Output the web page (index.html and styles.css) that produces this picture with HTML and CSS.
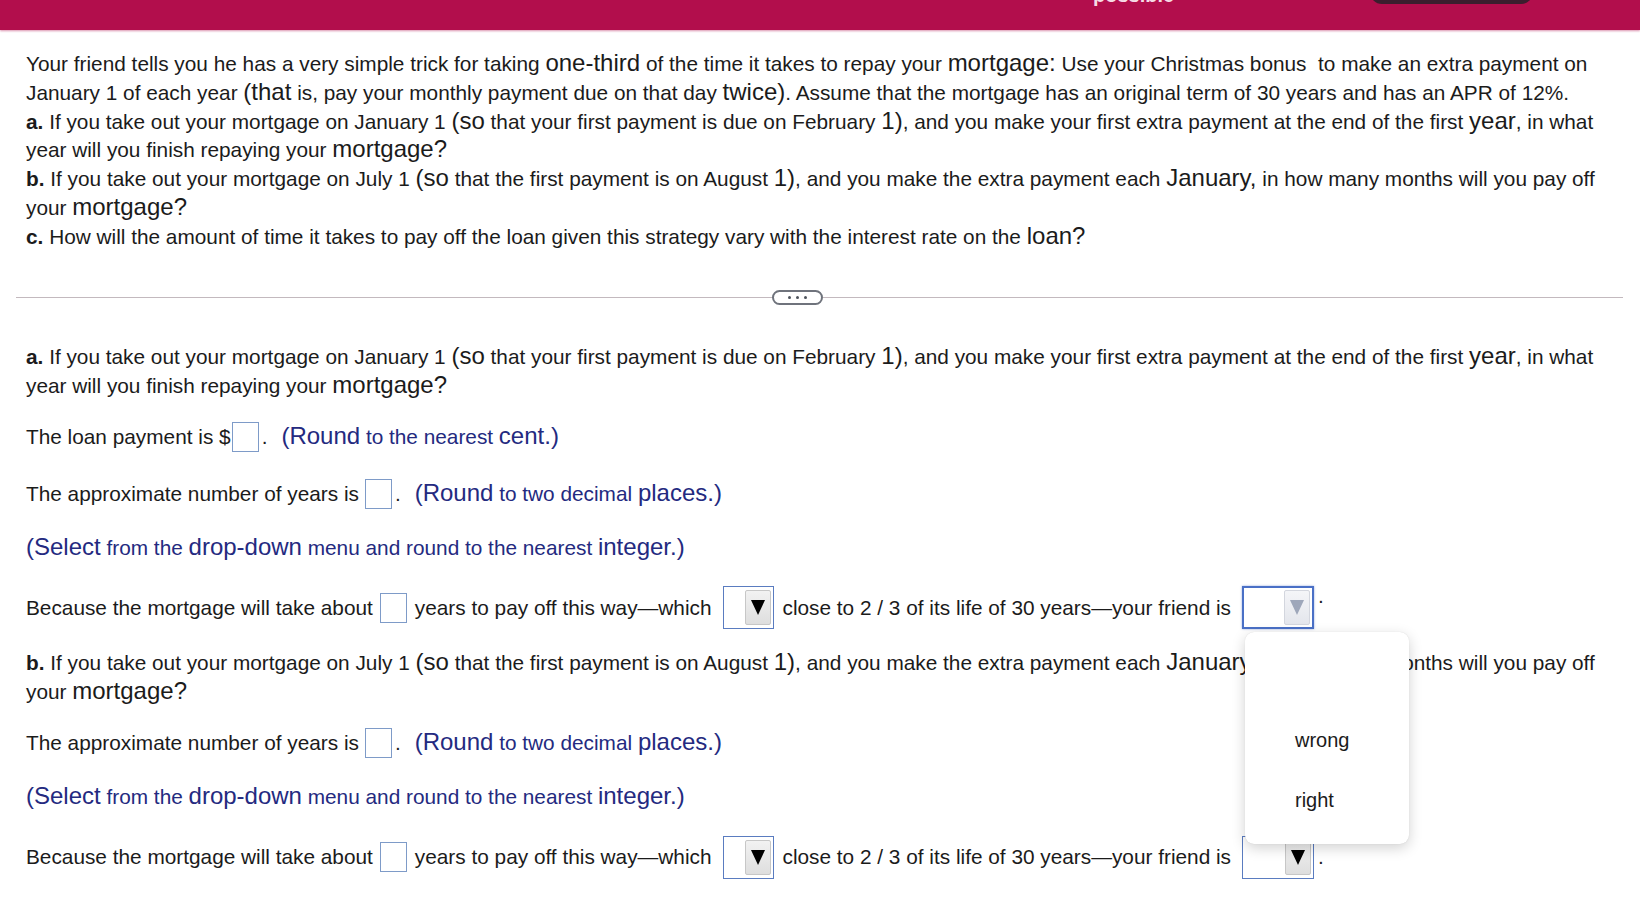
FILE: index.html
```html
<!DOCTYPE html>
<html>
<head>
<meta charset="utf-8">
<link rel="stylesheet" href="styles.css">
</head>
<body>
<header class="topbar">
  <span class="topbar-text">possible</span>
  <span class="topbar-btn"></span>
</header>
<main class="content">
  <div class="intro">
    <p class="line">Your friend tells you he has a very simple trick for taking <span class="big">one-third</span> of the time it takes to repay your <span class="big">mortgage:</span> Use your Christmas bonus&nbsp; to make an extra payment on January 1 of each year <span class="big">(that</span> is, pay your monthly payment due on that day <span class="big">twice)</span>. Assume that the mortgage has an original term of 30 years and has an APR of 12%.</p>
    <p class="line"><b>a.</b> If you take out your mortgage on January 1 <span class="big">(so</span> that your first payment is due on February <span class="big">1)</span>, and you make your first extra payment at the end of the first <span class="big">year</span>, in what year will you finish repaying your <span class="big">mortgage?</span></p>
    <p class="line"><b>b.</b> If you take out your mortgage on July 1 <span class="big">(so</span> that the first payment is on August <span class="big">1)</span>, and you make the extra payment each <span class="big">January,</span> in how many months will you pay off your <span class="big">mortgage?</span></p>
    <p class="line"><b>c.</b> How will the amount of time it takes to pay off the loan given this strategy vary with the interest rate on the <span class="big">loan?</span></p>
  </div>

  <div class="divider"><span class="rule rule-left"></span><span class="pill"><i></i><i></i><i></i></span><span class="rule"></span></div>

  <p class="line part-a"><b>a.</b> If you take out your mortgage on January 1 <span class="big">(so</span> that your first payment is due on February <span class="big">1)</span>, and you make your first extra payment at the end of the first <span class="big">year</span>, in what year will you finish repaying your <span class="big">mortgage?</span></p>

  <div class="row r-loan">The loan payment is $<span class="box box-tight"></span>.<span class="hint"><span class="big">(Round</span> to the nearest <span class="big">cent.)</span></span></div>
  <div class="row r-years">The approximate number of years is<span class="box"></span>.<span class="hint"><span class="big">(Round</span> to two decimal <span class="big">places.)</span></span></div>
  <div class="row r-select"><span class="hint hint-first"><span class="big">(Select</span> from the <span class="big">drop-down</span> menu and round to the nearest <span class="big">integer.)</span></span></div>
  <div class="row r-because">Because the mortgage will take about<span class="box box-mid"></span>years to pay off this way—which<span class="select"><span class="arrow"></span></span>close to 2 / 3 of its life of 30 years—your friend is<span class="select select-focus"><span class="arrow"></span></span>.
    <div class="menu">
      <div class="menu-item">wrong</div>
      <div class="menu-item">right</div>
    </div>
  </div>

  <p class="line part-b"><b>b.</b> If you take out your mortgage on July 1 <span class="big">(so</span> that the first payment is on August <span class="big">1)</span>, and you make the extra payment each <span class="big">January,</span> in how many months will you pay off your <span class="big">mortgage?</span></p>

  <div class="row r-years2">The approximate number of years is<span class="box"></span>.<span class="hint"><span class="big">(Round</span> to two decimal <span class="big">places.)</span></span></div>
  <div class="row r-select"><span class="hint hint-first"><span class="big">(Select</span> from the <span class="big">drop-down</span> menu and round to the nearest <span class="big">integer.)</span></span></div>
  <div class="row r-because">Because the mortgage will take about<span class="box box-mid"></span>years to pay off this way—which<span class="select"><span class="arrow"></span></span>close to 2 / 3 of its life of 30 years—your friend is<span class="select select-last"><span class="arrow"></span></span>.</div>
</main>
</body>
</html>
```
FILE: styles.css
```css
html, body {
  margin: 0;
  padding: 0;
  background: #ffffff;
}
body {
  font-family: "Liberation Sans", Arial, Helvetica, sans-serif;
  color: #1b1b1b;
  font-size: 20.8px;
  overflow: hidden;
}
.topbar {
  height: 30px;
  background: #b20e4c;
  display: flex;
  align-items: flex-start;
  box-shadow: 0 1px 2px rgba(178, 14, 76, 0.45);
  overflow: hidden;
}
.topbar-text {
  margin-left: 1093px;
  margin-top: -15px;
  font-size: 20px;
  line-height: 20px;
  color: #f6dbe5;
  font-weight: bold;
}
.topbar-btn {
  margin-left: auto;
  margin-right: 107px;
  margin-top: -36px;
  width: 163px;
  height: 40px;
  border-radius: 12px;
  background: #3b1e2e;
}
.content {
  padding: 20px 16px 0 26px;
  position: relative;
}
.line {
  margin: 0;
  line-height: 28.75px;
  width: 1605px;
}
.big {
  font-size: 24px;
  line-height: 20px;
}
b {
  font-weight: bold;
}
.divider {
  display: flex;
  align-items: center;
  margin: 38px 1px 0 -10px;
  height: 16px;
}
.rule {
  flex: 1;
  height: 1px;
  background: #c3b9be;
}
.rule-left {
  flex: none;
  width: 756px;
}
.pill {
  width: 47px;
  height: 11px;
  border: 2px solid #6f737c;
  border-radius: 8px;
  display: flex;
  align-items: center;
  justify-content: center;
  gap: 5px;
}
.pill i {
  width: 3px;
  height: 3px;
  border-radius: 50%;
  background: #4e535c;
}
.part-a {
  margin-top: 38px;
}
.row {
  height: 44px;
  display: flex;
  align-items: center;
  white-space: pre;
  position: relative;
}
.r-loan { margin-top: 14px; }
.r-years { margin-top: 13px; }
.r-select { margin-top: 10px; }
.r-because { margin-top: 16px; }
.part-b { margin-top: 19px; }
.r-years2 { margin-top: 15px; }
.hint {
  color: #242a80;
  font-size: 20.8px;
  margin-left: 14px;
}
.hint-first {
  margin-left: 0;
}
.box {
  display: inline-block;
  width: 25px;
  height: 28px;
  border: 1px solid #7e9bc8;
  margin: 0 3px 0 6px;
}
.box-tight {
  margin-left: 1px;
}
.box-mid {
  margin: 0 8px 0 7px;
}
.select {
  display: inline-flex;
  justify-content: flex-end;
  align-items: center;
  width: 49px;
  height: 41px;
  border: 1px solid #5a7cc0;
  margin: 0 9px 0 11px;
  box-sizing: content-box;
}
.select-last {
  width: 70px;
  margin-right: 4px;
}
.arrow {
  width: 26px;
  height: 35px;
  margin-right: 2px;
  background: linear-gradient(#f2f2f2, #dedede);
  border: 1px solid #c7c7c7;
  border-radius: 2px;
  box-sizing: border-box;
  position: relative;
}
.arrow::after {
  content: "";
  position: absolute;
  left: 5px;
  top: 9px;
  border-left: 7px solid transparent;
  border-right: 7px solid transparent;
  border-top: 15px solid #000;
}
.select-focus {
  width: 68px;
  height: 39px;
  border: 2px solid #4a70c6;
  box-shadow: 0 0 2px rgba(74, 112, 198, 0.6);
  margin-right: 4px;
}
.select-focus .arrow {
  background: linear-gradient(#f4f5f8, #e4e6ec);
  border-color: #d3d6de;
}
.select-focus .arrow::after {
  border-top-color: #9ea7ba;
}
.menu {
  position: absolute;
  left: 1219px;
  top: 46px;
  width: 164px;
  height: 212px;
  background: #ffffff;
  border-radius: 9px;
  box-shadow: 0 4px 14px rgba(0, 0, 0, 0.18), 0 0 1px rgba(0, 0, 0, 0.15);
  display: flex;
  flex-direction: column;
  padding-top: 92px;
  box-sizing: border-box;
  z-index: 2;
}
.menu-item {
  padding-left: 50px;
  height: 64px;
  line-height: 32px;
  font-size: 20px;
  color: #1b1b1b;
  white-space: nowrap;
}
```
